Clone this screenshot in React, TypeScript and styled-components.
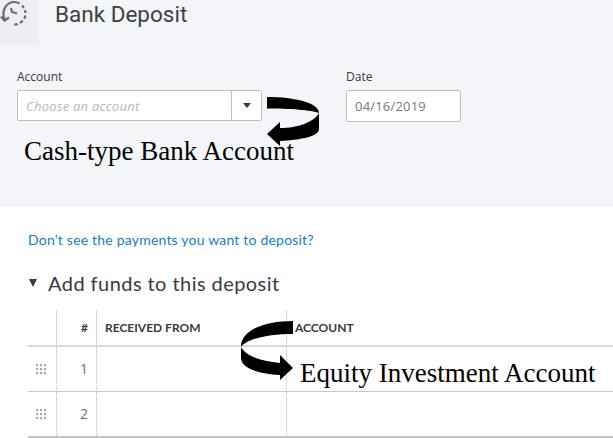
import React from "react";
import styled, { createGlobalStyle } from "styled-components";

const Global = createGlobalStyle`
  html, body { margin: 0; padding: 0; background: #fff; }
  #root { width: 613px; height: 438px; overflow: hidden; }
`;
const Page = styled.div`
  position: relative; width: 613px; height: 438px; overflow: hidden;
  font-family: Lato, "Open Sans", sans-serif; color: #393a3d; background: #fff;
`;
const Band = styled.section`
  height: 207px; background: #f4f5f8; display: flex; flex-direction: column;
`;
const Header = styled.header`display: flex; align-items: flex-start; gap: 16px;`;
const Tile = styled.div`
  width: 39px; height: 45px; background: #eceef1; color: #6b6c72;
  display: flex; align-items: flex-start; justify-content: flex-start;
`;
const Title = styled.h1`
  margin: 0; font: 400 22.5px/28px Roboto, sans-serif; letter-spacing: 0; color: #404145;
`;
const Form = styled.div`display: flex; gap: 84px; padding: 25px 0 0 17px;`;
const Field = styled.div`display: flex; flex-direction: column; gap: 6px;`;
const Label = styled.label`font: 400 12px/14px "Open Sans", sans-serif; color: #393a3d; letter-spacing: 0;`;
const Combo = styled.div`
  width: 245px; height: 31px; box-sizing: border-box; display: flex; background: #fff;
  border: 1px solid #babec5; border-radius: 2px;
`;
const Placeholder = styled.span`
  flex: 1; padding-left: 8px; font: italic 400 13px/30px "Open Sans", sans-serif; color: #b5b8be; letter-spacing: 0.25px;
`;
const Caret = styled.span`
  width: 29px; border-left: 1px solid #babec5; display: flex; align-items: center; justify-content: center;
  &::after { content: ""; border: 4px solid transparent; border-top: 5px solid #393a3d; border-bottom: 0; }
`;
const DateBox = styled.div`
  width: 115px; height: 32px; box-sizing: border-box; background: #fff; border: 1px solid #babec5; border-radius: 2px;
  padding-left: 8px; font: 400 13px/31px "Open Sans", sans-serif; color: #77787d; letter-spacing: 0.2px;
`;
const Content = styled.section`padding: 25px 0 0 28px;`;
const Link = styled.a`
  display: block; font: 400 14px/16px Lato, sans-serif; color: #0f80c8; letter-spacing: 0.2px;
`;
const Section = styled.h2`
  margin: 23px 0 15px; display: flex; align-items: center; gap: 11px;
  font: 400 20px/24px Lato, sans-serif; letter-spacing: 0.44px; color: #393a3d;
  &::before { content: ""; border: 4.5px solid transparent; border-top: 8px solid #393a3d; border-bottom: 0; margin-left: 1px; }
`;
const Table = styled.div`
  display: grid; grid-template-columns: 28px 40px 190px 1fr; border-bottom: 2px solid #c4c6ca;
`;
const HeadCell = styled.div<{ $first?: boolean; $right?: boolean }>`
  height: 37px; box-sizing: border-box; border-bottom: 2px solid #d4d7dc;
  border-left: ${(p) => (p.$first ? "0" : "1px solid #d4d7dc")};
  padding: 0 8px; display: flex; align-items: center;
  justify-content: ${(p) => (p.$right ? "flex-end" : "flex-start")};
  font: 700 12px/14px Lato, sans-serif; color: #393a3d; letter-spacing: 0;
`;
const Cell = styled.div<{ $first?: boolean; $right?: boolean }>`
  height: 45px; box-sizing: border-box; border-bottom: 1px solid #c4c6ca;
  border-left: ${(p) => (p.$first ? "0" : "1px dotted #bbbcc0")};
  padding: 0 8px; display: flex; align-items: center;
  justify-content: ${(p) => (p.$right ? "flex-end" : "flex-start")};
  font: 400 14px/16px "Open Sans", sans-serif; color: #6b6c72;
`;
const LastCell = styled(Cell)`border-bottom: 0; height: 44px;`;
const Note = styled.div<{ $x: number; $y: number }>`
  position: absolute; left: ${(p) => p.$x}px; top: ${(p) => p.$y}px; white-space: nowrap;
  font: 400 27px/32px "Liberation Serif", serif; color: #000;
`;
const Overlay = styled.svg`position: absolute; left: 0; top: 0; pointer-events: none;`;

const HistoryIcon = () => (
  <svg width="28" height="27" viewBox="0 0 28 27" fill="none" stroke="currentColor" strokeWidth="2.2">
    <path d="M4.5 19.5 C 1 10 7 2 14 2 C 16 2 18 2.5 19.5 3.5" />
    <path d="M22 5.5 A 11.5 11.5 0 0 1 25.5 13" strokeDasharray="3 2.5" />
    <path d="M25.5 15.5 A 11.5 11.5 0 0 1 13 24.5" strokeDasharray="3.5 2.5" />
    <path d="M1 16.5 L4.5 20.5 L9 17.5" />
    <path d="M11 8 L12 12 L17 13.5" />
  </svg>
);
const Grip = () => (
  <svg width="11" height="11" viewBox="0 0 11 11" fill="#a9abb0">
    {[0, 4, 8].flatMap((x) => [0, 4, 8].map((y) => <rect key={`${x}-${y}`} x={x} y={y} width="2.2" height="2.2" />))}
  </svg>
);

export default function App() {
  return (
    <Page>
      <Global />
      <Band>
        <Header>
          <Tile><HistoryIcon /></Tile>
          <Title>Bank Deposit</Title>
        </Header>
        <Form>
          <Field>
            <Label>Account</Label>
            <Combo><Placeholder>Choose an account</Placeholder><Caret /></Combo>
          </Field>
          <Field>
            <Label>Date</Label>
            <DateBox>04/16/2019</DateBox>
          </Field>
        </Form>
      </Band>
      <Content>
        <Link>Don’t see the payments you want to deposit?</Link>
        <Section>Add funds to this deposit</Section>
        <Table>
          <HeadCell $first />
          <HeadCell $right>#</HeadCell>
          <HeadCell>RECEIVED FROM</HeadCell>
          <HeadCell>ACCOUNT</HeadCell>
          <Cell $first><Grip /></Cell>
          <Cell $right>1</Cell>
          <Cell />
          <Cell />
          <LastCell $first><Grip /></LastCell>
          <LastCell $right>2</LastCell>
          <LastCell />
          <LastCell />
        </Table>
      </Content>
      <Overlay width="613" height="438" viewBox="0 0 613 438">
        <path d="M267 97 C295 97 319 103 319 113 L319 129 C319 137 298 140 280 141 L280 146 L267 134 L280 122 L280 128 C298 128 314 122 319 113 C312 110 290 108.5 267 108.5 Z" fill="#000" />
        <path d="M293 321 C265 321 241 330 241 347 L241 358 C241 368 258 374 280 375 L280 380 L293 368 L280 355 L280 363 C260 361 246 356 241 347 C246 339 268 334 293 334 Z" fill="#000" />
      </Overlay>
      <Note $x={24} $y={135}>Cash-type Bank Account</Note>
      <Note $x={300} $y={357}>Equity Investment Account</Note>
    </Page>
  );
}
